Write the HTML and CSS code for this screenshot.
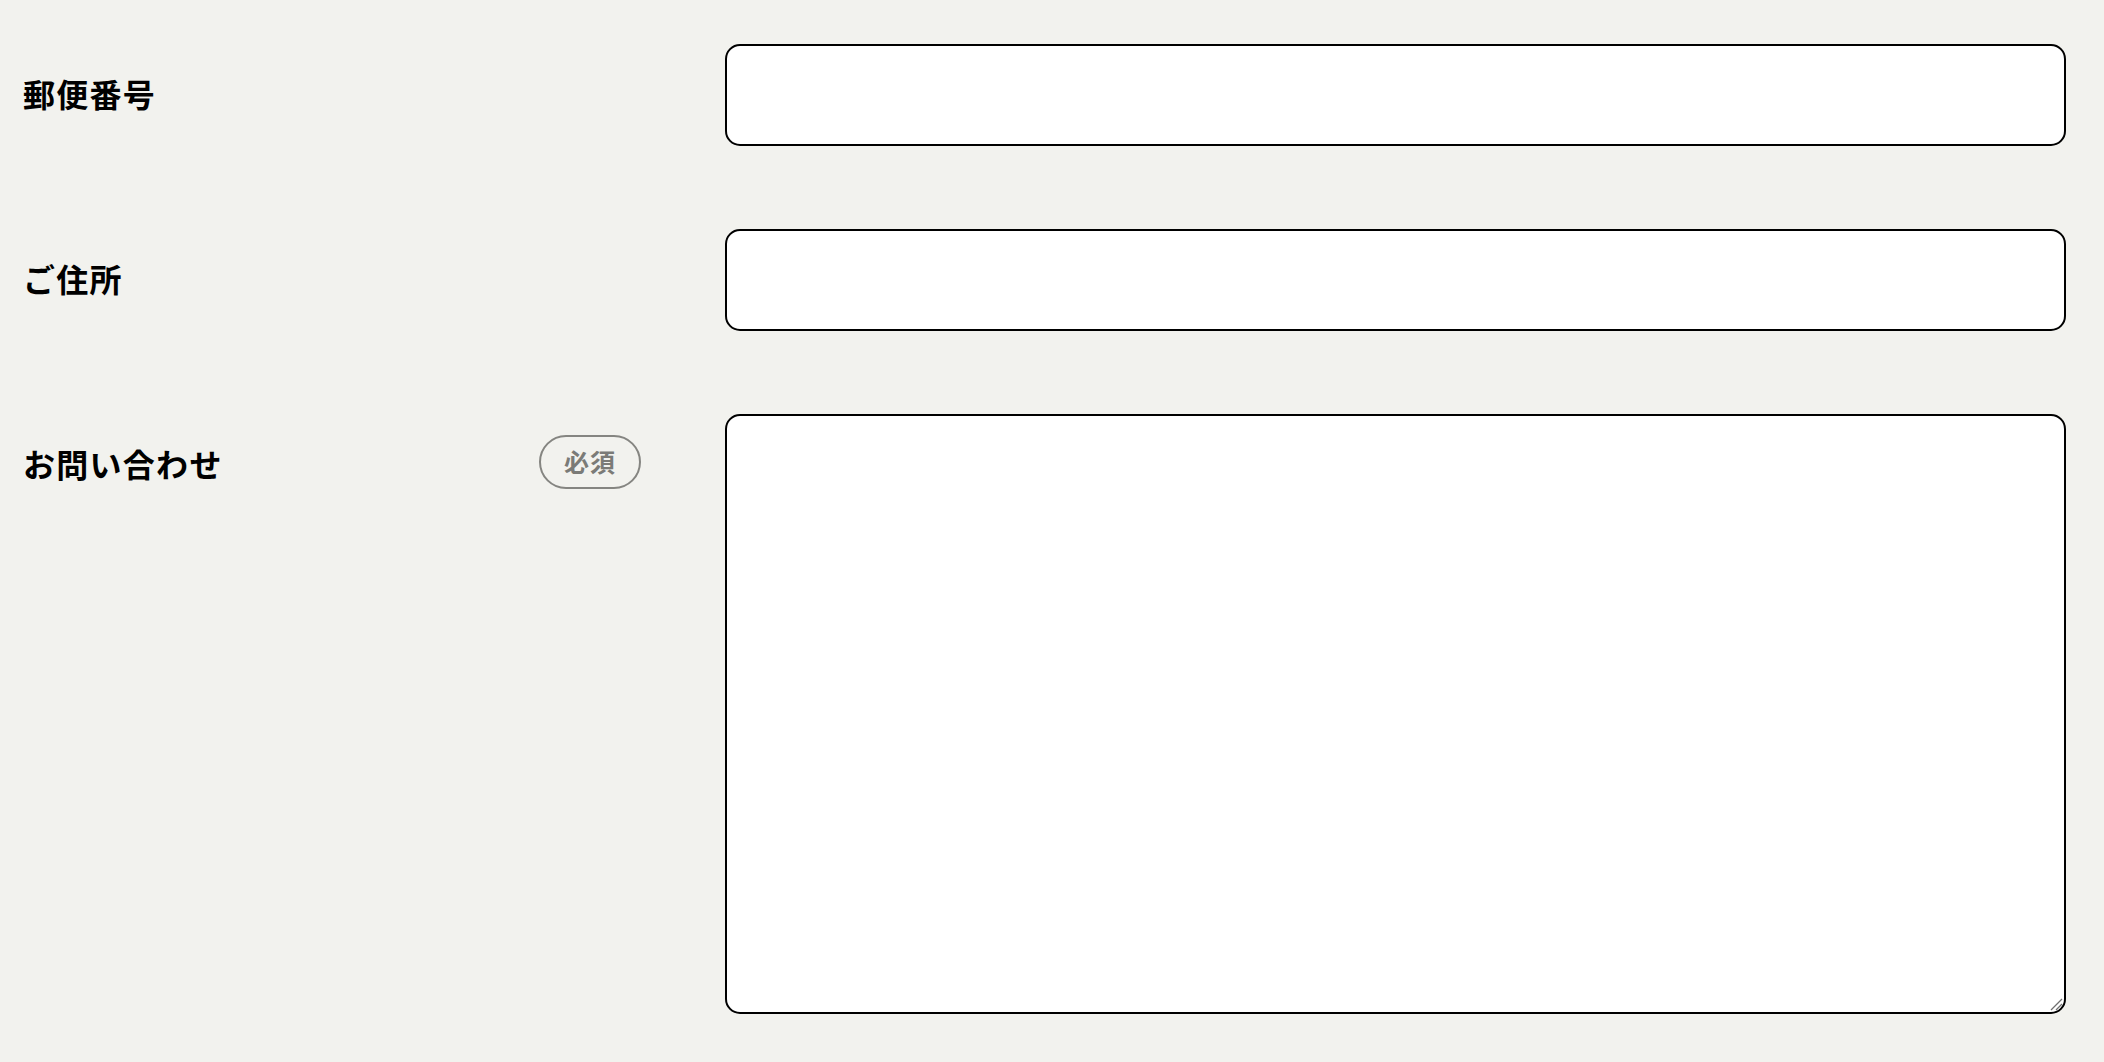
FILE: index.html
```html
<!DOCTYPE html>
<html lang="ja">
<head>
<meta charset="utf-8">
<title>お問い合わせフォーム</title>
<link rel="stylesheet" href="styles.css">
</head>
<body>
<form class="form">
  <div class="row">
    <div class="label-col">
      <label class="label" for="zip">郵便番号</label>
    </div>
    <input class="field" id="zip" type="text">
  </div>
  <div class="row">
    <div class="label-col">
      <label class="label" for="addr">ご住所</label>
    </div>
    <input class="field" id="addr" type="text">
  </div>
  <div class="row">
    <div class="label-col">
      <label class="label" for="msg">お問い合わせ</label>
      <span class="badge">必須</span>
    </div>
    <div class="area-wrap">
      <textarea class="field area" id="msg"></textarea>
      <svg class="grip" width="14" height="14" viewBox="0 0 14 14" aria-hidden="true">
        <path d="M2 13 L13 2 M7 13 L13 7" stroke="#6f6f6f" stroke-width="1.3" fill="none"/>
      </svg>
    </div>
  </div>
</form>
</body>
</html>
```

FILE: styles.css
```css
html, body {
  margin: 0;
  padding: 0;
  background: #f2f2ee;
}

body {
  font-family: "Noto Sans CJK JP", "Noto Sans", sans-serif;
  color: #000;
}

.form {
  display: flex;
  flex-direction: column;
  gap: 83px;
  padding: 44px 38px 0 23px;
}

.row {
  display: flex;
  align-items: flex-start;
  gap: 84px;
}

.label-col {
  width: 618px;
  height: 102px;
  flex: none;
  display: flex;
  align-items: center;
  justify-content: space-between;
}

.label {
  font-size: 32px;
  font-weight: 700;
  letter-spacing: 0.04em;
  line-height: 1;
  padding-bottom: 5px;
}

.badge {
  box-sizing: border-box;
  width: 102px;
  height: 54px;
  margin-bottom: 7px;
  border: 2px solid #858581;
  border-radius: 27px;
  display: flex;
  align-items: center;
  justify-content: center;
  font-size: 25px;
  font-weight: 700;
  color: #7b7b77;
  letter-spacing: 0.04em;
  padding-bottom: 2px;
}

.field {
  box-sizing: border-box;
  flex: 1;
  height: 102px;
  margin: 0;
  border: 2px solid #000;
  border-radius: 15px;
  background: #fff;
  font-family: inherit;
  font-size: 24px;
  padding: 10px 20px;
  outline: none;
}

.area-wrap {
  flex: 1;
  position: relative;
  display: flex;
}

.area {
  height: 600px;
  resize: none;
}

.grip {
  position: absolute;
  right: 3px;
  bottom: 3px;
  pointer-events: none;
}
```
